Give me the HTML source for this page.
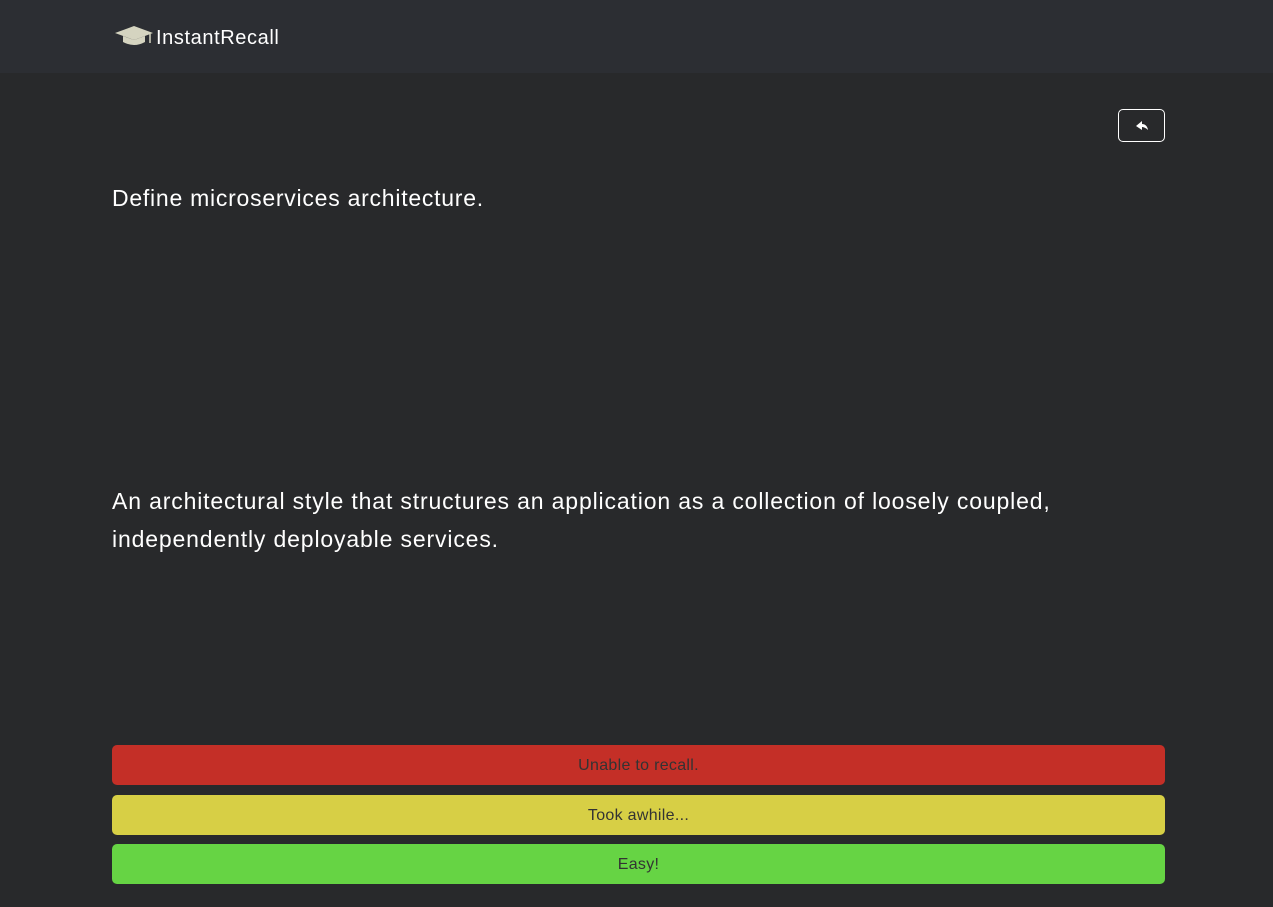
<!DOCTYPE html>
<html><head><style>
body{margin:0;background:#28292b;font-family:"Liberation Sans",sans-serif;color:#fff;width:1273px;height:907px;overflow:hidden}
.nav{height:73px;background:#2c2e33;position:relative}
.brand{position:absolute;left:115px;top:25px;font-size:20px;letter-spacing:0.6px}
.brand svg{vertical-align:-3px;margin-right:1px}
.back{position:absolute;left:1118px;top:109px;width:47px;height:33px;border:1px solid #fff;border-radius:5px;box-sizing:border-box}
.q{position:absolute;left:112px;top:185px;font-size:23px;letter-spacing:0.75px}
.a{position:absolute;left:112px;top:482px;font-size:23px;line-height:38px;width:1040px;letter-spacing:0.85px}
.btn{position:absolute;left:112px;width:1053px;height:40px;border-radius:5px;color:#333;font-size:16px;text-align:center;line-height:42px;letter-spacing:0.3px}
</style></head><body>
<div class="nav"><div class="brand"><svg width="40" height="22" viewBox="0 0 40 22"><path d="M0 8 L19 1 L38 8 L19 15 Z" fill="#d5d4c0"/><path d="M8 11 V17 Q19 23 30 17 V11 L19 15 Z" fill="#d5d4c0"/><path d="M35 9 V18" stroke="#d5d4c0" stroke-width="1.5"/></svg>InstantRecall</div></div>
<div class="back"><svg width="47" height="33" viewBox="0 0 47 33" style="position:absolute;left:-1px;top:-1px"><path d="M18 17 L24 12 V15 Q29 15 30 21 Q27 18 24 18 V21 Z" fill="#fff"/></svg></div>
<div class="q">Define microservices architecture.</div>
<div class="a">An architectural style that structures an application as a collection of loosely coupled, independently deployable services.</div>
<div class="btn" style="top:745px;background:#c42f27">Unable to recall.</div>
<div class="btn" style="top:795px;background:#d7cf45">Took awhile...</div>
<div class="btn" style="top:844px;background:#66d444">Easy!</div>
</body></html>
